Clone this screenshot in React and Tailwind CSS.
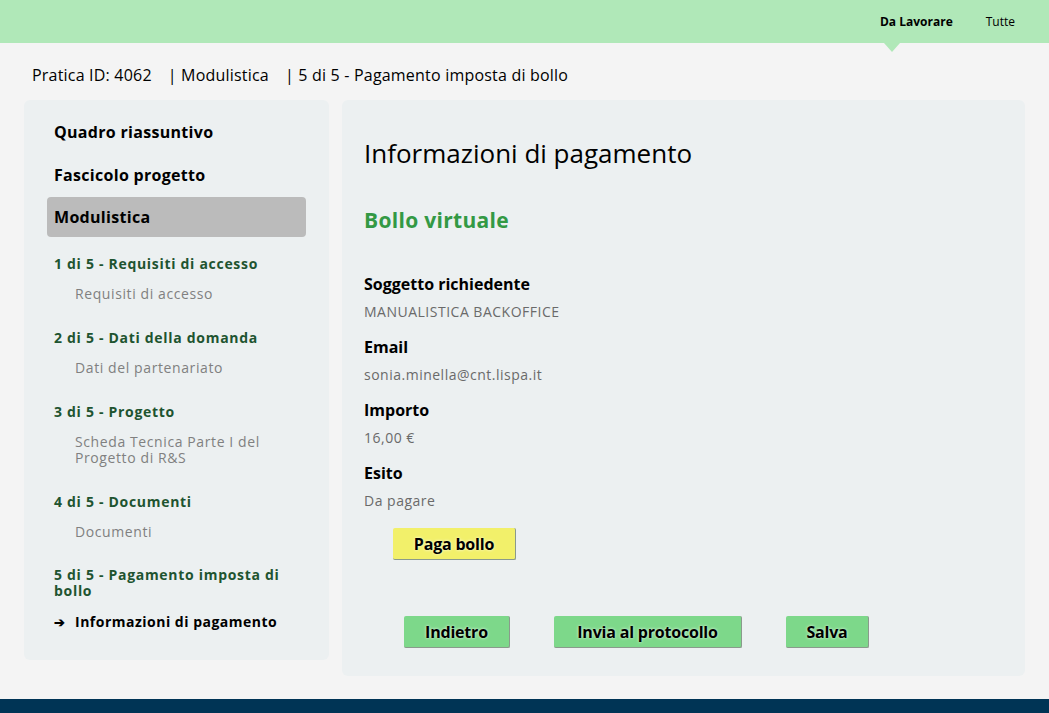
import React from "react";

const steps = [
  { title: "1 di 5 - Requisiti di accesso", subs: ["Requisiti di accesso"] },
  { title: "2 di 5 - Dati della domanda", subs: ["Dati del partenariato"] },
  { title: "3 di 5 - Progetto", subs: ["Scheda Tecnica Parte I del Progetto di R&S"] },
  { title: "4 di 5 - Documenti", subs: ["Documenti"] },
];

const fields = [
  { label: "Soggetto richiedente", value: "MANUALISTICA BACKOFFICE" },
  { label: "Email", value: "sonia.minella@cnt.lispa.it" },
  { label: "Importo", value: "16,00 €" },
  { label: "Esito", value: "Da pagare" },
];

const Btn = ({ children, className }) => (
  <button
    className={`h-[32px] rounded-[2px] border-r border-b border-[#8a9a8c] text-[16px] font-bold text-black tracking-[-0.2px] [text-shadow:0_0_3px_rgba(255,255,255,0.9)] ${className}`}
  >
    {children}
  </button>
);

export default function App() {
  return (
    <div className="min-h-[713px] bg-[#f4f4f4] flex flex-col font-['Open_Sans','Noto_Sans',sans-serif] text-black">
      {/* header */}
      <header className="h-[43px] bg-[#b0e8b8] flex items-stretch justify-end pr-[34px] gap-[33px] text-[12px]">
        <div className="relative font-bold flex items-center">
          Da Lavorare
          <span className="absolute left-[4px] top-full w-0 h-0 border-l-[8px] border-r-[8px] border-t-[9px] border-l-transparent border-r-transparent border-t-[#b0e8b8]" />
        </div>
        <div className="flex items-center">Tutte</div>
      </header>

      {/* breadcrumb */}
      <div className="h-[57px] flex items-center pl-[32px] pt-[6px] text-[16px] tracking-[0.2px] gap-[16px]">
        <span>Pratica ID: 4062</span>
        <span>| Modulistica</span>
        <span>| 5 di 5 - Pagamento imposta di bollo</span>
      </div>

      <div className="flex items-start gap-[13px] pl-[24px] pr-[24px]">
        {/* sidebar */}
        <aside className="w-[305px] h-[560px] bg-[#ecf0f1] rounded-[6px] pt-[20px] px-[23px]">
          <div className="px-[7px] h-[24px] flex items-center text-[16px] font-bold tracking-[0.3px]">Quadro riassuntivo</div>
          <div className="px-[7px] h-[24px] mt-[19px] flex items-center text-[16px] font-bold tracking-[0.3px]">Fascicolo progetto</div>
          <div className="mt-[10px] h-[40px] bg-[#bbbbbb] rounded-[4px] px-[7px] flex items-center text-[16px] font-bold tracking-[0.3px]">Modulistica</div>
          <div className="px-[7px] pt-[19px] flex flex-col">
            {steps.map((s) => (
              <div key={s.title} className="mb-[28px]">
                <div className="text-[14px] font-bold text-[#1e5430] leading-[16px] tracking-[0.7px]">{s.title}</div>
                {s.subs.map((sub) => (
                  <div key={sub} className="pl-[21px] mt-[14px] text-[14px] text-[#808080] leading-[16px] w-[215px] tracking-[0.6px]">
                    {sub}
                  </div>
                ))}
              </div>
            ))}
            <div className="-mt-[1px] text-[14px] font-bold text-[#1e5430] leading-[16px] w-[240px] tracking-[0.7px]">
              5 di 5 - Pagamento imposta di bollo
            </div>
            <div className="mt-[15px] flex items-center text-[14px] font-bold leading-[16px] tracking-[0.5px]">
              <span className="w-[21px] text-[13px]">➔</span>
              Informazioni di pagamento
            </div>
          </div>
        </aside>

        {/* main */}
        <main className="flex-1 h-[576px] bg-[#ecf0f1] rounded-[6px] pl-[22px] pt-[37px]">
          <h1 className="text-[26px] leading-[32px]">Informazioni di pagamento</h1>
          <h2 className="mt-[38px] text-[21px] font-bold text-[#339944] leading-[26px] tracking-[0.3px]">Bollo virtuale</h2>
          <div className="mt-[41px] flex flex-col">
            {fields.map((f, i) => (
              <div key={f.label} className={i ? "mt-[16px]" : ""}>
                <div className="text-[16px] font-bold leading-[20px]">{f.label}</div>
                <div className="mt-[9px] text-[14px] text-[#6a6a6a] leading-[18px] tracking-[0.5px]">{f.value}</div>
              </div>
            ))}
          </div>
          <div className="mt-[18px] pl-[29px]">
            <Btn className="w-[123px] bg-[#f2f06a]">Paga bollo</Btn>
          </div>
          <div className="mt-[56px] pl-[40px] flex gap-[44px]">
            <Btn className="w-[106px] bg-[#7dd88a]">Indietro</Btn>
            <Btn className="w-[188px] bg-[#7dd88a]">Invia al protocollo</Btn>
            <Btn className="w-[83px] bg-[#7dd88a]">Salva</Btn>
          </div>
        </main>
      </div>

      <footer className="mt-[23px] h-[14px] bg-[#003455]" />
    </div>
  );
}
